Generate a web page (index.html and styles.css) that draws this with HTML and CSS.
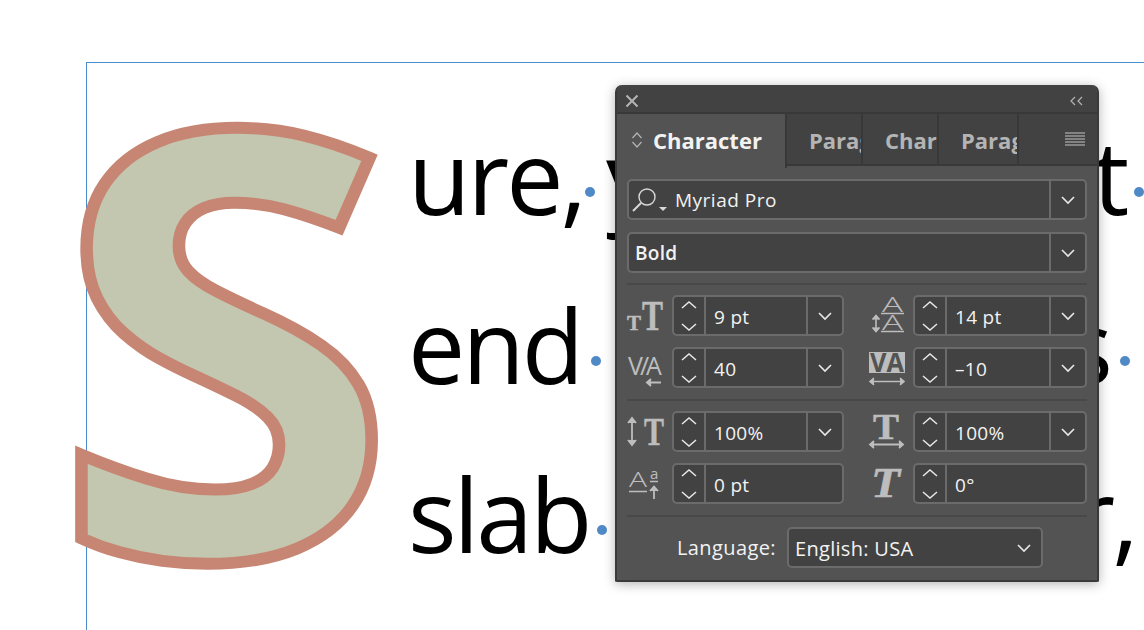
FILE: index.html
```html
<!DOCTYPE html>
<html lang="en">

<head>
    <meta charset="UTF-8">
    <meta name="viewport" content="width=device-width, initial-scale=1.0">
    <title>Character panel</title>
    <link rel="stylesheet" href="styles.css">
</head>

<body>
    <svg class="defs" width="0" height="0">
        <symbol id="chev-down" viewBox="0 0 16 10">
            <polyline points="2,2 8,8 14,2" fill="none" stroke="#e8e8e8" stroke-width="1.6" />
        </symbol>
        <symbol id="updown" viewBox="0 0 18 32">
            <polyline points="2,8 9,2 16,8" fill="none" stroke="#e8e8e8" stroke-width="1.5" />
            <polyline points="2,24 9,30 16,24" fill="none" stroke="#e8e8e8" stroke-width="1.5" />
        </symbol>
    </svg>

    <div class="page">
        <div class="frame">
            <div class="dropcap">S</div>
            <p class="line">ure,<i class="dot dot-a"></i><span class="word-y">y</span><span class="tail-a">t</span><i class="dot dot-end-a"></i></p>
            <p class="line">end<i class="dot dot-b"></i><span class="tail-b">s</span><i class="dot dot-end-b"></i><span class="tail-t">i</span></p>
            <p class="line">slab<i class="dot dot-c"></i><span class="tail-c">r,</span></p>
        </div>

        <div class="panel">
            <div class="titlebar">
                <svg class="close" width="14" height="14" viewBox="0 0 14 14">
                    <path d="M1.500 1.500 L12.500 12.500 M12.500 1.500 L1.500 12.500" stroke="#b4b4b4" stroke-width="2" />
                </svg>
                <svg class="collapse" width="16" height="10" viewBox="0 0 16 10">
                    <path d="M6 1 L2 5 L6 9 M13 1 L9 5 L13 9" fill="none" stroke="#b4b4b4" stroke-width="1.2" />
                </svg>
            </div>

            <div class="tabs">
                <div class="tab tab-active">
                    <svg width="12" height="18" viewBox="0 0 12 18">
                        <path d="M1.500 7 L6 2 L10.500 7 M1.500 11 L6 16 L10.500 11" fill="none" stroke="#b4b4b4" stroke-width="1.2" />
                    </svg>
                    <span>Character</span>
                </div>
                <div class="tab tab-para">Paragraph</div>
                <div class="tab tab-char">Character</div>
                <div class="tab tab-para2">Paragraph</div>
                <div class="tab-menu">
                    <svg width="20" height="14" viewBox="0 0 20 14">
                        <path d="M0 1 H20 M0 4 H20 M0 7 H20 M0 10 H20 M0 13 H20" stroke="#c4c4c4" stroke-width="1.2" />
                    </svg>
                </div>
            </div>

            <div class="body">
                <div class="combo combo-wide">
                    <div class="search-icon">
                        <svg width="38" height="30" viewBox="0 0 38 30">
                            <circle cx="15" cy="12" r="8" fill="none" stroke="#d8d8d8" stroke-width="1.4" />
                            <path d="M9 18 L1 26" stroke="#d8d8d8" stroke-width="2" />
                            <path d="M27 22 H35 L31 26 Z" fill="#d8d8d8" />
                        </svg>
                    </div>
                    <div class="value value-font">Myriad Pro</div>
                    <div class="drop"><svg class="chev"><use href="#chev-down" /></svg></div>
                </div>
                <div class="combo combo-wide">
                    <div class="value value-style">Bold</div>
                    <div class="drop"><svg class="chev"><use href="#chev-down" /></svg></div>
                </div>

                <hr class="rule rule-first">

                <div class="grid">
                    <svg class="icon" width="45" height="41" viewBox="0 0 45 41">
                        <text x="0" y="35" class="serif" font-size="22" textLength="14" lengthAdjust="spacingAndGlyphs">T</text>
                        <text x="15" y="35" class="serif" font-size="42" textLength="21" lengthAdjust="spacingAndGlyphs">T</text>
                    </svg>
                    <div class="combo">
                        <div class="stepper"><svg class="updown"><use href="#updown" /></svg></div>
                        <div class="value">9 pt</div>
                        <div class="drop"><svg class="chev"><use href="#chev-down" /></svg></div>
                    </div>
                    <svg class="icon icon-right" width="44" height="41" viewBox="0 0 44 41">
                        <text x="13" y="17" class="sans-light" font-size="20" textLength="21" lengthAdjust="spacingAndGlyphs">A</text>
                        <path d="M12 18.500 H35 M12 36.500 H35" stroke="#bdbdbd" stroke-width="1.4" />
                        <text x="13" y="35" class="sans-light" font-size="20" textLength="21" lengthAdjust="spacingAndGlyphs">A</text>
                        <path d="M7 21 V36 M3.500 24.500 L7 20.500 L10.500 24.500 M3.500 32.500 L7 36.500 L10.500 32.500" fill="#bdbdbd" stroke="#bdbdbd" stroke-width="1.600" />
                    </svg>
                    <div class="combo">
                        <div class="stepper"><svg class="updown"><use href="#updown" /></svg></div>
                        <div class="value">14 pt</div>
                        <div class="drop"><svg class="chev"><use href="#chev-down" /></svg></div>
                    </div>

                    <svg class="icon" width="45" height="41" viewBox="0 0 45 41">
                        <text x="1" y="28" class="sans" font-size="25" letter-spacing="-3">V/A</text>
                        <path d="M20 35.500 H34 M24 32 L20 35.500 L24 39" fill="#bdbdbd" stroke="#bdbdbd" stroke-width="2" />
                    </svg>
                    <div class="combo">
                        <div class="stepper"><svg class="updown"><use href="#updown" /></svg></div>
                        <div class="value">40</div>
                        <div class="drop"><svg class="chev"><use href="#chev-down" /></svg></div>
                    </div>
                    <svg class="icon icon-right" width="44" height="41" viewBox="0 0 44 41">
                        <rect x="0" y="5" width="36" height="21" fill="#bdbdbd" />
                        <text x="1" y="25" class="sans-bold" font-size="26" textLength="34" lengthAdjust="spacingAndGlyphs">VA</text>
                        <path d="M1 34.500 H35 M5 31 L1 34.500 L5 38 M31 31 L35 34.500 L31 38" fill="#bdbdbd" stroke="#bdbdbd" stroke-width="1.600" />
                    </svg>
                    <div class="combo">
                        <div class="stepper"><svg class="updown"><use href="#updown" /></svg></div>
                        <div class="value">–10</div>
                        <div class="drop"><svg class="chev"><use href="#chev-down" /></svg></div>
                    </div>

                    <hr class="rule rule-grid">

                    <svg class="icon" width="45" height="41" viewBox="0 0 45 41">
                        <path d="M5 8 V33 M1 12 L5 7 L9 12 M1 29 L5 34 L9 29" fill="#bdbdbd" stroke="#bdbdbd" stroke-width="1.800" />
                        <text x="17" y="34" class="serif" font-size="40" textLength="20" lengthAdjust="spacingAndGlyphs">T</text>
                    </svg>
                    <div class="combo">
                        <div class="stepper"><svg class="updown"><use href="#updown" /></svg></div>
                        <div class="value">100%</div>
                        <div class="drop"><svg class="chev"><use href="#chev-down" /></svg></div>
                    </div>
                    <svg class="icon icon-right" width="44" height="41" viewBox="0 0 44 41">
                        <text x="4" y="28" class="serif" font-size="36" textLength="26" lengthAdjust="spacingAndGlyphs">T</text>
                        <path d="M1 33.500 H34 M5 30 L1 33.500 L5 37 M30 30 L34 33.500 L30 37" fill="#bdbdbd" stroke="#bdbdbd" stroke-width="1.800" />
                    </svg>
                    <div class="combo">
                        <div class="stepper"><svg class="updown"><use href="#updown" /></svg></div>
                        <div class="value">100%</div>
                        <div class="drop"><svg class="chev"><use href="#chev-down" /></svg></div>
                    </div>

                    <svg class="icon" width="45" height="41" viewBox="0 0 45 41">
                        <text x="2" y="24" class="sans-light" font-size="21" textLength="18" lengthAdjust="spacingAndGlyphs">A</text>
                        <text x="23" y="16" class="sans" font-size="15">a</text>
                        <path d="M2 28.500 H20 M23 18.500 H31" stroke="#bdbdbd" stroke-width="1.400" />
                        <path d="M27 36 V25 M23 28 L27 23.500 L31 28" fill="#bdbdbd" stroke="#bdbdbd" stroke-width="1.800" />
                    </svg>
                    <div class="combo">
                        <div class="stepper"><svg class="updown"><use href="#updown" /></svg></div>
                        <div class="value">0 pt</div>
                    </div>
                    <svg class="icon icon-right" width="44" height="41" viewBox="0 0 44 41">
                        <text x="2" y="34" class="serif-italic" font-size="42" textLength="29" lengthAdjust="spacingAndGlyphs">T</text>
                    </svg>
                    <div class="combo">
                        <div class="stepper"><svg class="updown"><use href="#updown" /></svg></div>
                        <div class="value">0°</div>
                    </div>
                </div>

                <hr class="rule rule-last">

                <div class="language">
                    <span class="language-label">Language:</span>
                    <div class="combo combo-lang">
                        <div class="value value-lang">English: USA</div>
                        <svg class="chev"><use href="#chev-down" /></svg>
                    </div>
                </div>
            </div>
        </div>
    </div>
</body>

</html>
```

FILE: styles.css
```css
* {
    margin: 0;
    padding: 0;
    box-sizing: border-box;
}

body {
    background: #fff;
    font-family: "Open Sans", "Liberation Sans", sans-serif;
}

.defs {
    position: absolute;
}

.page {
    position: relative;
    width: 1144px;
    height: 630px;
    overflow: hidden;
    padding: 62px 0 0 86px;
}

/* text frame with the story behind the panel */
.frame {
    position: relative;
    height: 568px;
    border-top: 1px solid #4a8bcb;
    border-left: 1px solid #4a8bcb;
    padding-left: 321px;
    padding-top: 28px;
}

.line {
    height: 169px;
    line-height: 169px;
    font-size: 102px;
    letter-spacing: -3px;
    color: #000;
    white-space: nowrap;
}

.dropcap {
    position: absolute;
    left: -26px;
    top: -32px;
    font-size: 594px;
    line-height: 1;
    font-weight: 700;
    color: #c3c7b0;
    -webkit-text-stroke: 12px #c78673;
    transform: scaleX(1.05);
}

.dot {
    display: inline-block;
    width: 10px;
    height: 10px;
    border-radius: 50%;
    background: #4f8ac6;
    margin-bottom: 18px;
}

.dot-a {
    margin-left: 1px;
}

.dot-b {
    margin-left: 10px;
}

.dot-c {
    margin-left: 8px;
}

.word-y {
    margin-left: 11px;
}

.tail-a {
    margin-left: 439px;
}

.tail-b {
    margin-left: 463px;
}

.tail-c {
    margin-left: 466px;
}

.dot-end-a {
    margin-left: 8px;
}

.dot-end-b {
    margin-left: 10px;
}

.tail-t {
    margin-left: 8px;
}

/* panel */
.panel {
    position: absolute;
    left: 615px;
    top: 85px;
    width: 484px;
    height: 497px;
    background: #535353;
    border: 2px solid #3a3a3a;
    border-top: 0;
    border-radius: 7px 7px 2px 2px;
    box-shadow: 0 2px 12px rgba(0, 0, 0, 0.3);
    color: #f2f2f2;
    font-size: 19px;
}

.titlebar {
    display: flex;
    align-items: center;
    justify-content: space-between;
    height: 27px;
    padding: 4px 12px 0 8px;
    background: #424242;
    border-radius: 7px 7px 0 0;
}

.tabs {
    display: flex;
    height: 54px;
    background: #424242;
    border-top: 2px solid #383838;
    border-bottom: 2px solid #383838;
    font-size: 22px;
    font-weight: 700;
    color: #b4b4b4;
}

.tab {
    display: flex;
    align-items: center;
    overflow: hidden;
    white-space: nowrap;
    padding-top: 2px;
    border-right: 2px solid #383838;
}

.tab-active {
    width: 170px;
    height: 54px;
    padding: 0 0 2px 14px;
    gap: 10px;
    background: #535353;
    color: #f2f2f2;
}

.tab-para {
    width: 76px;
    padding-left: 22px;
}

.tab-char {
    width: 76px;
    padding-left: 22px;
}

.tab-para2 {
    width: 80px;
    padding-left: 22px;
}

.tab-menu {
    display: flex;
    flex: 1;
    align-items: center;
    justify-content: flex-end;
    padding-right: 12px;
}

.body {
    padding: 13px 10px 0 10px;
}

.combo {
    display: flex;
    align-items: stretch;
    height: 41px;
    background: #424242;
    border: 2px solid #6b6b6b;
    border-radius: 5px;
}

.combo-wide {
    margin-bottom: 12px;
}

.value {
    display: flex;
    flex: 1;
    align-items: center;
    padding: 2px 0 0 8px;
    letter-spacing: 0.3px;
    font-weight: 500;
}

.value-font {
    padding: 0 0 0 5px;
    letter-spacing: 0.5px;
}

.value-style {
    padding: 0 0 0 6px;
    font-weight: 600;
}

.search-icon {
    display: flex;
    align-items: center;
    padding-left: 3px;
}

.stepper {
    display: flex;
    align-items: center;
    justify-content: center;
    width: 32px;
    border-right: 2px solid #6b6b6b;
}

.updown {
    width: 18px;
    height: 32px;
}

.drop {
    display: flex;
    align-items: center;
    justify-content: center;
    width: 36px;
    border-left: 2px solid #6b6b6b;
}

.chev {
    width: 16px;
    height: 10px;
}

.rule {
    border: 0;
    height: 2px;
    background: #484848;
}

.rule-first {
    margin: -2px 0 10px 0;
}

.grid {
    display: grid;
    grid-template-columns: 45px 172px 1fr 174px;
    row-gap: 11px;
}

.icon {
    overflow: visible;
}

.icon-right {
    justify-self: end;
}

.rule-grid {
    grid-column: 1 / -1;
    margin-bottom: -1px;
}

.rule-last {
    margin-top: 11px;
}

.serif {
    font-family: "Liberation Serif", serif;
    font-weight: 700;
    fill: #bdbdbd;
    stroke: #bdbdbd;
    stroke-width: 0.5px;
}

.serif-italic {
    font-family: "Liberation Serif", serif;
    font-weight: 700;
    font-style: italic;
    fill: #bdbdbd;
    stroke: #bdbdbd;
    stroke-width: 0.5px;
}

.sans {
    font-family: "Open Sans", sans-serif;
    fill: #bdbdbd;
}

.sans-light {
    font-family: "Open Sans", sans-serif;
    font-weight: 300;
    fill: #bdbdbd;
}

.sans-bold {
    font-family: "Open Sans", sans-serif;
    font-weight: 700;
    fill: #535353;
}

.language {
    display: flex;
    align-items: center;
    margin-top: 10px;
    padding-left: 50px;
    font-size: 20px;
    font-weight: 500;
}

.language-label {
    flex: none;
    width: 110px;
    letter-spacing: 0.4px;
}

.combo-lang {
    width: 256px;
    align-items: center;
    padding-right: 9px;
}

.value-lang {
    height: 100%;
    padding-left: 6px;
}
```
